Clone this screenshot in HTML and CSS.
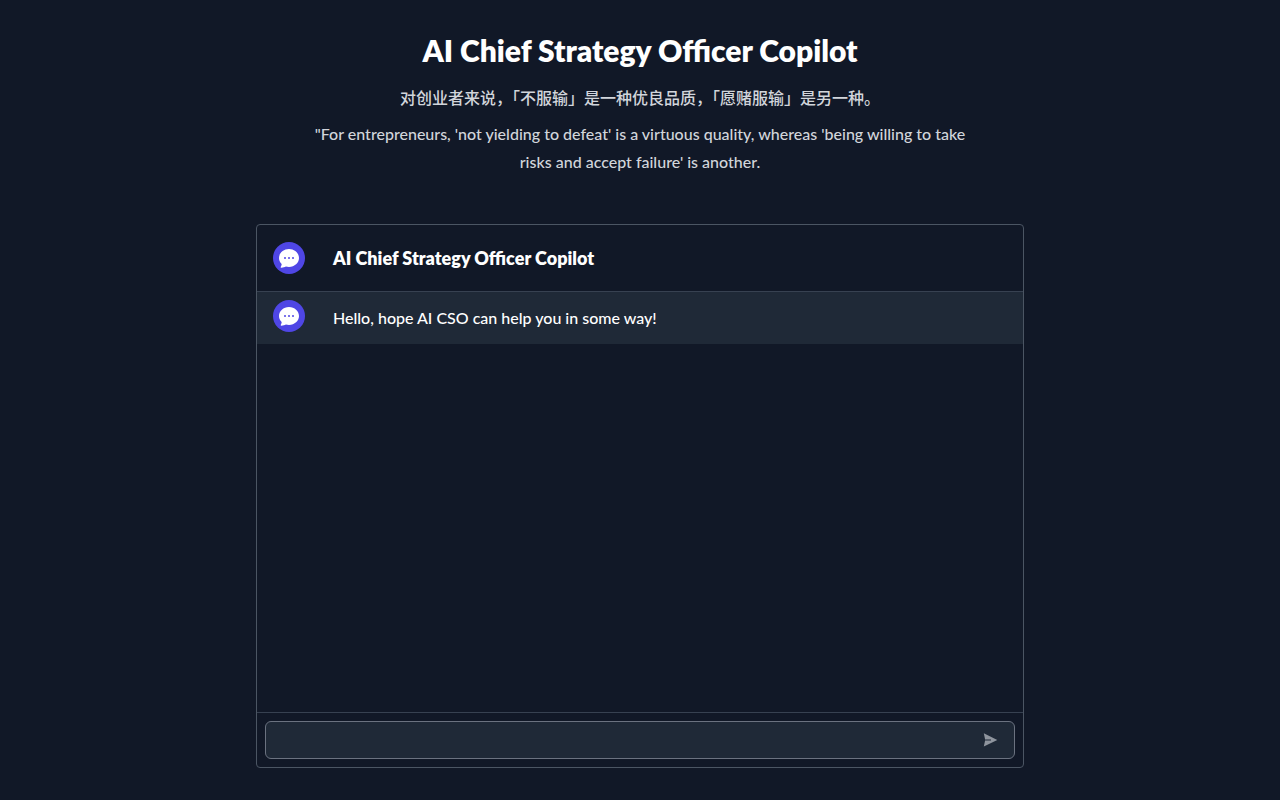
FILE: index.html
```html
<!DOCTYPE html>
<html lang="en">
<head>
    <meta charset="UTF-8">
    <meta name="viewport" content="width=device-width, initial-scale=1.0">
    <title>AI Chief Strategy Officer Copilot</title>
    <link rel="stylesheet" href="styles.css">
</head>
<body>
    <!-- Speech bubble shared by the avatars -->
    <svg class="sprite" aria-hidden="true">
        <symbol id="bubble" viewBox="0 0 32 32">
            <path fill="#fff" d="M16 7C10.400 7 6 11 6 16c0 2.400 1 4.500 2.700 6.100-.1 1.200-.4 2-.9 2.700-.3.500.1 1 .6.900 1.800-.2 3.200-.5 4.500-1.200 1 .3 2 .4 3.100.4 5.600 0 10-4 10-8.900S21.600 7 16 7z"/>
            <g fill="#4f46e5">
                <circle cx="12" cy="16" r="1"/>
                <circle cx="16" cy="16" r="1"/>
                <circle cx="20" cy="16" r="1"/>
            </g>
        </symbol>
    </svg>

    <div class="page">
        <header class="intro">
            <h1>AI Chief Strategy Officer Copilot</h1>
            <p lang="zh-CN">对创业者来说，「不服输」是一种优良品质，「愿赌服输」是另一种。</p>
            <p>"For entrepreneurs, 'not yielding to defeat' is a virtuous quality, whereas 'being willing to take risks and accept failure' is another.</p>
        </header>

        <main class="chat">
            <div class="chat-header">
                <span class="avatar"><svg><use href="#bubble"/></svg></span>
                <h2>AI Chief Strategy Officer Copilot</h2>
            </div>

            <div class="messages">
                <div class="message">
                    <span class="avatar"><svg><use href="#bubble"/></svg></span>
                    <p>Hello, hope AI CSO can help you in some way!</p>
                </div>
            </div>

            <form class="composer">
                <div class="field">
                    <input type="text" aria-label="Message">
                    <button type="button" aria-label="Send">
                        <svg viewBox="0 0 16 16"><path fill="#8f959e" d="M1.800 1.300 15.300 8 1.800 14.600 3 9H9V7H3z"/><path fill="#656c77" d="M3 7.200H9v1.600H3z"/></svg>
                    </button>
                </div>
            </form>
        </main>
    </div>
</body>
</html>
```

FILE: styles.css
```css
* {
    box-sizing: border-box;
}
body {
    margin: 0;
    background-color: #111827;
    color: white;
    font-family: Lato, "Noto Sans CJK SC", sans-serif;
    font-size: 16px;
    line-height: 28px;
}
h1, h2, p {
    margin: 0;
}
.sprite {
    position: absolute;
    width: 0;
    height: 0;
}
.page {
    display: flex;
    flex-direction: column;
    min-height: 100vh;
    max-width: 768px;
    margin: 0 auto;
    padding: 32px 0;
}
.intro {
    max-width: 672px;
    margin: 0 auto 48px;
    text-align: center;
    color: #d1d5db;
    font-weight: 500;
}
.intro h1 {
    margin-bottom: 16px;
    color: white;
    font-size: 30px;
    font-weight: 800;
    line-height: 36px;
}
.intro p + p {
    margin-top: 8px;
}

/* Chat window */
.chat {
    display: flex;
    flex: 1;
    flex-direction: column;
    border: 1px solid #4b5563;
    border-radius: 4px;
}
.chat-header {
    display: flex;
    align-items: center;
    gap: 28px;
    padding: 17px 16px;
    border-bottom: 1px solid #374151;
}
.chat-header h2 {
    font-size: 18px;
    font-weight: 800;
    line-height: 32px;
}
.avatar {
    flex: none;
    width: 32px;
    height: 32px;
    border-radius: 50%;
    background-color: #4f46e5;
}
.avatar svg {
    display: block;
    width: 32px;
    height: 32px;
}
.messages {
    flex: 1;
}
.message {
    display: flex;
    gap: 28px;
    padding: 8px 16px 12px;
    background-color: #1f2937;
    font-weight: 500;
}
.message p {
    padding-top: 4px;
}

/* Input row */
.composer {
    padding: 8px;
    border-top: 1px solid #374151;
}
.field {
    display: flex;
    align-items: center;
    height: 38px;
    padding-right: 16px;
    border: 1px solid #6b7280;
    border-radius: 6px;
    background-color: #1f2937;
}
.field input {
    flex: 1;
    min-width: 0;
    height: 36px;
    padding: 0 12px;
    border: none;
    outline: none;
    background: none;
    color: white;
    font: inherit;
}
.field button {
    width: 16px;
    height: 16px;
    padding: 0;
    border: none;
    background: none;
    cursor: pointer;
}
.field svg {
    display: block;
    width: 16px;
    height: 16px;
}
```
